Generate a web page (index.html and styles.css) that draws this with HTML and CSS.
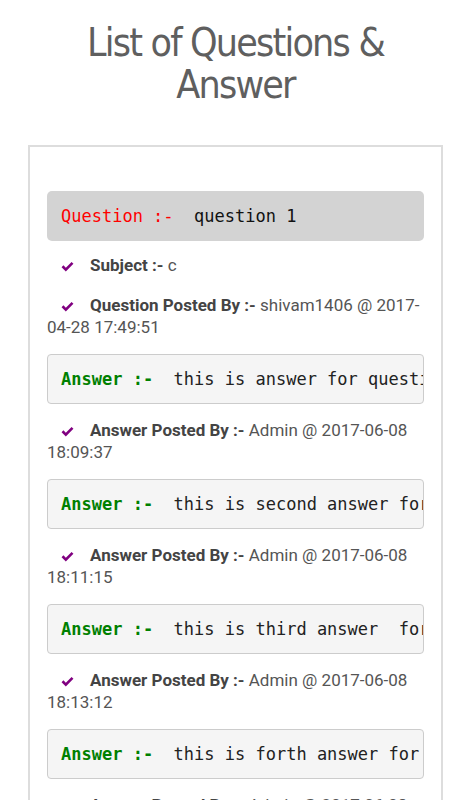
FILE: index.html
```html
<!DOCTYPE html>
<html>
<head>
<meta charset="utf-8">
<link rel="stylesheet" href="styles.css">
</head>
<body>
<h1 class="title">List of Questions &amp; Answer</h1>
<div class="card">
  <div class="qbox"><span class="qlabel">Question :-</span>  question 1</div>
  <p class="info info-first"><svg class="check" viewBox="0 0 14 11"><path d="M0.6 6.2 L2.6 4.2 L5.2 6.8 L11.4 0.6 L13.4 2.6 L5.2 10.8 Z"/></svg><b>Subject :-</b> c</p>
  <p class="info"><svg class="check" viewBox="0 0 14 11"><path d="M0.6 6.2 L2.6 4.2 L5.2 6.8 L11.4 0.6 L13.4 2.6 L5.2 10.8 Z"/></svg><b>Question Posted By :-</b> shivam1406 @ 2017-04-28 17:49:51</p>

  <pre class="abox"><span class="alabel">Answer :-</span>  this is answer for question 1</pre>
  <p class="info"><svg class="check" viewBox="0 0 14 11"><path d="M0.6 6.2 L2.6 4.2 L5.2 6.8 L11.4 0.6 L13.4 2.6 L5.2 10.8 Z"/></svg><b>Answer Posted By :-</b> Admin @ 2017-06-08 18:09:37</p>

  <pre class="abox"><span class="alabel">Answer :-</span>  this is second answer for question 1</pre>
  <p class="info"><svg class="check" viewBox="0 0 14 11"><path d="M0.6 6.2 L2.6 4.2 L5.2 6.8 L11.4 0.6 L13.4 2.6 L5.2 10.8 Z"/></svg><b>Answer Posted By :-</b> Admin @ 2017-06-08 18:11:15</p>

  <pre class="abox"><span class="alabel">Answer :-</span>  this is third answer  for question 1</pre>
  <p class="info"><svg class="check" viewBox="0 0 14 11"><path d="M0.6 6.2 L2.6 4.2 L5.2 6.8 L11.4 0.6 L13.4 2.6 L5.2 10.8 Z"/></svg><b>Answer Posted By :-</b> Admin @ 2017-06-08 18:13:12</p>

  <pre class="abox"><span class="alabel">Answer :-</span>  this is forth answer for question 1</pre>
  <p class="info"><svg class="check" viewBox="0 0 14 11"><path d="M0.6 6.2 L2.6 4.2 L5.2 6.8 L11.4 0.6 L13.4 2.6 L5.2 10.8 Z"/></svg><b>Answer Posted By :-</b> Admin @ 2017-06-08 18:15:40</p>
</div>
</body>
</html>
```

FILE: styles.css
```css
html, body {
  margin: 0;
  padding: 0;
  background: #fff;
}
body {
  padding: 0 28px;
  font-family: Roboto, "Liberation Sans", sans-serif;
  color: #444;
}
.title {
  margin: 22px 10px 39px;
  font-family: "DejaVu Sans Condensed", "DejaVu Sans", sans-serif;
  font-stretch: condensed;
  font-weight: normal;
  font-size: 39px;
  letter-spacing: -1.8px;
  line-height: 42px;
  color: #5f5f5f;
  text-align: center;
}
.card {
  border: 2px solid #ddd;
  padding: 44px 17px 40px;
}
.qbox {
  background: #d3d3d3;
  border-radius: 5px;
  padding: 13px 14px;
  font-family: "DejaVu Sans Mono", monospace;
  font-size: 17px;
  line-height: 24px;
  color: #111;
  white-space: pre;
  overflow: hidden;
}
.qlabel { color: #f00; }
.abox {
  margin: 16px 0 0;
  background: #f5f5f5;
  border: 1px solid #ccc;
  border-radius: 4px;
  padding: 12px 13px;
  font-family: "DejaVu Sans Mono", monospace;
  font-size: 17px;
  line-height: 24px;
  color: #222;
  white-space: pre;
  overflow: hidden;
}
.alabel {
  color: #008000;
  font-weight: bold;
}
.info {
  margin: 15px 0 0;
  font-size: 17px;
  line-height: 22px;
  color: #555;
}
.info-first { margin-top: 13px; }
.info + .info { margin-top: 18px; }
.info b {
  color: #444;
  font-weight: bold;
}
.check {
  width: 13px;
  height: 11px;
  fill: #800080;
  margin: 0 16px 0 14px;
  vertical-align: -1px;
}
```
